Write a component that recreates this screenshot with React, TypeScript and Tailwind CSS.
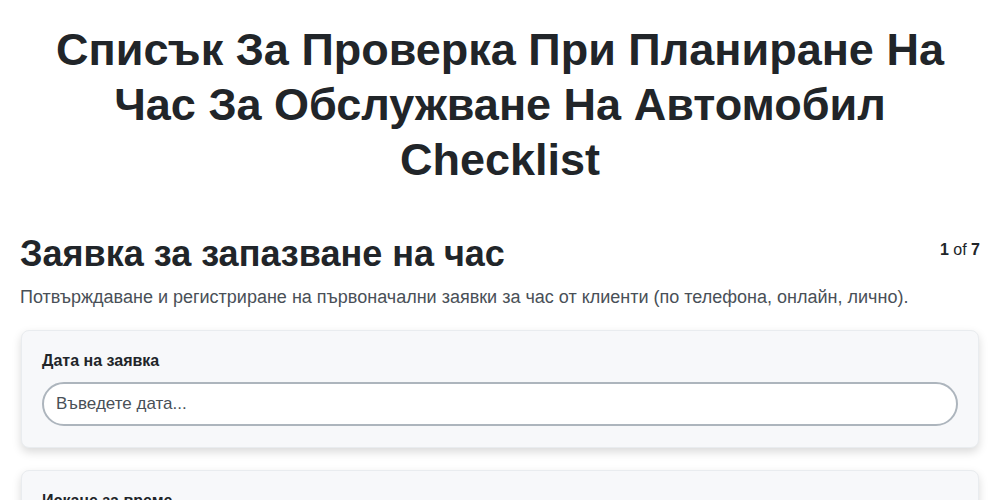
import { useState } from 'react'

const FIELDS = [
  { id: 'date', label: 'Дата на заявка', placeholder: 'Въведете дата...' },
  { id: 'time', label: 'Искане за време', placeholder: 'Въведете време...' },
  { id: 'client', label: 'Име на клиента', placeholder: 'Въведете име...' },
]

export default function App() {
  const [values, setValues] = useState<Record<string, string>>({})

  return (
    <div className="min-h-screen bg-white px-5 pb-10 font-['Liberation_Sans',Arial,sans-serif] text-[#212529]">
      {/* Page title */}
      <h1 className="mx-auto mt-[22px] max-w-[920px] text-center text-[45px] font-bold leading-[55px] text-[#212529]">
        Списък За Проверка При Планиране На Час За Обслужване На Автомобил Checklist
      </h1>

      {/* Step header */}
      <div className="mt-[45px] flex items-start justify-between">
        <h2 className="text-[36px] font-bold leading-[44px]">Заявка за запазване на час</h2>
        <div className="mt-[6px] text-[16px] text-[#212529]">
          <span className="font-bold">1</span> of <span className="font-bold">7</span>
        </div>
      </div>
      <p className="mt-[9px] text-[18px] leading-6 text-[#495057]">
        Потвърждаване и регистриране на първоначални заявки за час от клиенти (по телефона, онлайн, лично).
      </p>

      {/* Fields */}
      <div className="mt-[21px] flex flex-col gap-[22px]">
        {FIELDS.map((field) => (
          <div
            key={field.id}
            className="mx-px rounded-lg border border-[#e9ecef] bg-[#f7f8fa] px-5 pt-[20px] pb-[21px] shadow-[0_4px_10px_rgba(0,0,0,0.15)]"
          >
            <label className="block text-[16px] font-bold leading-5 text-[#212529]">{field.label}</label>
            <input
              value={values[field.id] ?? ''}
              onChange={(e) => setValues({ ...values, [field.id]: e.target.value })}
              placeholder={field.placeholder}
              className="mt-[11px] h-[44px] w-full rounded-full border-2 border-[#adb5bd] bg-white px-3 text-[17px] text-[#212529] outline-none placeholder:text-[#495057]"
            />
          </div>
        ))}
      </div>
    </div>
  )
}
